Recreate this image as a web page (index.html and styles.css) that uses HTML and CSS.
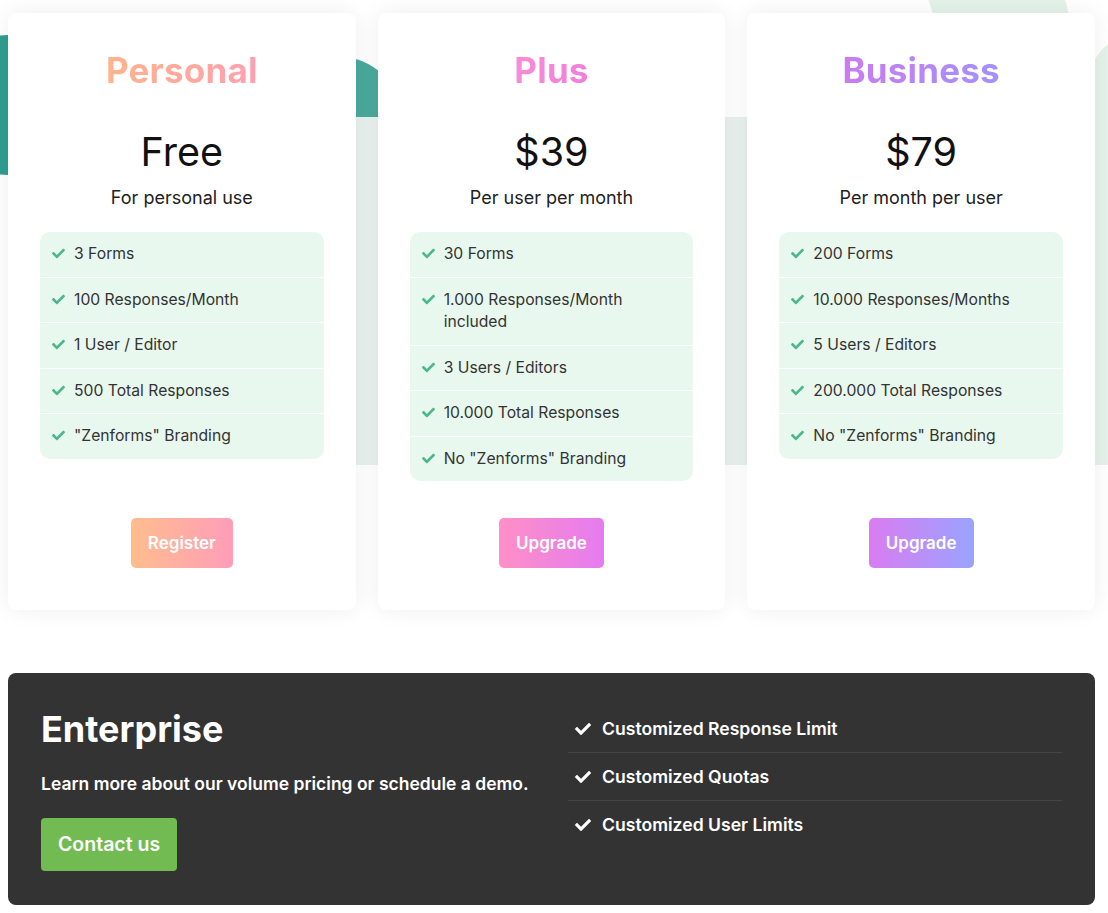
FILE: index.html
```html
<!DOCTYPE html>
<html lang="en">
<head>
<meta charset="utf-8">
<title>Pricing</title>
<link rel="stylesheet" href="styles.css">
</head>
<body>
<div class="page">
  <div class="deco" aria-hidden="true">
    <span class="blob blob-teal-left"></span>
    <span class="blob blob-teal-mid"></span>
    <span class="blob blob-band"></span>
    <span class="blob blob-green-top"></span>
    <span class="blob blob-green-right"></span>
  </div>

  <div class="plans">
    <article class="card">
      <h2 class="plan-name personal">Personal</h2>
      <div class="price">Free</div>
      <p class="period">For personal use</p>
      <ul class="features">
        <li><svg class="chk" viewBox="0 0 512 512"><path d="M173.9 439.4l-166.4-166.4c-10-10-10-26.2 0-36.2l36.2-36.2c10-10 26.2-10 36.2 0L192 312.7 432.1 72.6c10-10 26.2-10 36.2 0l36.2 36.2c10 10 10 26.2 0 36.2l-294.4 294.4c-10 10-26.2 10-36.2 0z"/></svg><span>3 Forms</span></li>
        <li><svg class="chk" viewBox="0 0 512 512"><path d="M173.9 439.4l-166.4-166.4c-10-10-10-26.2 0-36.2l36.2-36.2c10-10 26.2-10 36.2 0L192 312.7 432.1 72.6c10-10 26.2-10 36.2 0l36.2 36.2c10 10 10 26.2 0 36.2l-294.4 294.4c-10 10-26.2 10-36.2 0z"/></svg><span>100 Responses/Month</span></li>
        <li><svg class="chk" viewBox="0 0 512 512"><path d="M173.9 439.4l-166.4-166.4c-10-10-10-26.2 0-36.2l36.2-36.2c10-10 26.2-10 36.2 0L192 312.7 432.1 72.6c10-10 26.2-10 36.2 0l36.2 36.2c10 10 10 26.2 0 36.2l-294.4 294.4c-10 10-26.2 10-36.2 0z"/></svg><span>1 User / Editor</span></li>
        <li><svg class="chk" viewBox="0 0 512 512"><path d="M173.9 439.4l-166.4-166.4c-10-10-10-26.2 0-36.2l36.2-36.2c10-10 26.2-10 36.2 0L192 312.7 432.1 72.6c10-10 26.2-10 36.2 0l36.2 36.2c10 10 10 26.2 0 36.2l-294.4 294.4c-10 10-26.2 10-36.2 0z"/></svg><span>500 Total Responses</span></li>
        <li><svg class="chk" viewBox="0 0 512 512"><path d="M173.9 439.4l-166.4-166.4c-10-10-10-26.2 0-36.2l36.2-36.2c10-10 26.2-10 36.2 0L192 312.7 432.1 72.6c10-10 26.2-10 36.2 0l36.2 36.2c10 10 10 26.2 0 36.2l-294.4 294.4c-10 10-26.2 10-36.2 0z"/></svg><span>"Zenforms" Branding</span></li>
      </ul>
      <a class="btn btn-personal" href="#">Register</a>
    </article>

    <article class="card">
      <h2 class="plan-name plus">Plus</h2>
      <div class="price">$39</div>
      <p class="period">Per user per month</p>
      <ul class="features">
        <li><svg class="chk" viewBox="0 0 512 512"><path d="M173.9 439.4l-166.4-166.4c-10-10-10-26.2 0-36.2l36.2-36.2c10-10 26.2-10 36.2 0L192 312.7 432.1 72.6c10-10 26.2-10 36.2 0l36.2 36.2c10 10 10 26.2 0 36.2l-294.4 294.4c-10 10-26.2 10-36.2 0z"/></svg><span>30 Forms</span></li>
        <li><svg class="chk" viewBox="0 0 512 512"><path d="M173.9 439.4l-166.4-166.4c-10-10-10-26.2 0-36.2l36.2-36.2c10-10 26.2-10 36.2 0L192 312.7 432.1 72.6c10-10 26.2-10 36.2 0l36.2 36.2c10 10 10 26.2 0 36.2l-294.4 294.4c-10 10-26.2 10-36.2 0z"/></svg><span>1.000 Responses/Month<br>included</span></li>
        <li><svg class="chk" viewBox="0 0 512 512"><path d="M173.9 439.4l-166.4-166.4c-10-10-10-26.2 0-36.2l36.2-36.2c10-10 26.2-10 36.2 0L192 312.7 432.1 72.6c10-10 26.2-10 36.2 0l36.2 36.2c10 10 10 26.2 0 36.2l-294.4 294.4c-10 10-26.2 10-36.2 0z"/></svg><span>3 Users / Editors</span></li>
        <li><svg class="chk" viewBox="0 0 512 512"><path d="M173.9 439.4l-166.4-166.4c-10-10-10-26.2 0-36.2l36.2-36.2c10-10 26.2-10 36.2 0L192 312.7 432.1 72.6c10-10 26.2-10 36.2 0l36.2 36.2c10 10 10 26.2 0 36.2l-294.4 294.4c-10 10-26.2 10-36.2 0z"/></svg><span>10.000 Total Responses</span></li>
        <li><svg class="chk" viewBox="0 0 512 512"><path d="M173.9 439.4l-166.4-166.4c-10-10-10-26.2 0-36.2l36.2-36.2c10-10 26.2-10 36.2 0L192 312.7 432.1 72.6c10-10 26.2-10 36.2 0l36.2 36.2c10 10 10 26.2 0 36.2l-294.4 294.4c-10 10-26.2 10-36.2 0z"/></svg><span>No "Zenforms" Branding</span></li>
      </ul>
      <a class="btn btn-plus" href="#">Upgrade</a>
    </article>

    <article class="card">
      <h2 class="plan-name business">Business</h2>
      <div class="price">$79</div>
      <p class="period">Per month per user</p>
      <ul class="features">
        <li><svg class="chk" viewBox="0 0 512 512"><path d="M173.9 439.4l-166.4-166.4c-10-10-10-26.2 0-36.2l36.2-36.2c10-10 26.2-10 36.2 0L192 312.7 432.1 72.6c10-10 26.2-10 36.2 0l36.2 36.2c10 10 10 26.2 0 36.2l-294.4 294.4c-10 10-26.2 10-36.2 0z"/></svg><span>200 Forms</span></li>
        <li><svg class="chk" viewBox="0 0 512 512"><path d="M173.9 439.4l-166.4-166.4c-10-10-10-26.2 0-36.2l36.2-36.2c10-10 26.2-10 36.2 0L192 312.7 432.1 72.6c10-10 26.2-10 36.2 0l36.2 36.2c10 10 10 26.2 0 36.2l-294.4 294.4c-10 10-26.2 10-36.2 0z"/></svg><span>10.000 Responses/Months</span></li>
        <li><svg class="chk" viewBox="0 0 512 512"><path d="M173.9 439.4l-166.4-166.4c-10-10-10-26.2 0-36.2l36.2-36.2c10-10 26.2-10 36.2 0L192 312.7 432.1 72.6c10-10 26.2-10 36.2 0l36.2 36.2c10 10 10 26.2 0 36.2l-294.4 294.4c-10 10-26.2 10-36.2 0z"/></svg><span>5 Users / Editors</span></li>
        <li><svg class="chk" viewBox="0 0 512 512"><path d="M173.9 439.4l-166.4-166.4c-10-10-10-26.2 0-36.2l36.2-36.2c10-10 26.2-10 36.2 0L192 312.7 432.1 72.6c10-10 26.2-10 36.2 0l36.2 36.2c10 10 10 26.2 0 36.2l-294.4 294.4c-10 10-26.2 10-36.2 0z"/></svg><span>200.000 Total Responses</span></li>
        <li><svg class="chk" viewBox="0 0 512 512"><path d="M173.9 439.4l-166.4-166.4c-10-10-10-26.2 0-36.2l36.2-36.2c10-10 26.2-10 36.2 0L192 312.7 432.1 72.6c10-10 26.2-10 36.2 0l36.2 36.2c10 10 10 26.2 0 36.2l-294.4 294.4c-10 10-26.2 10-36.2 0z"/></svg><span>No "Zenforms" Branding</span></li>
      </ul>
      <a class="btn btn-business" href="#">Upgrade</a>
    </article>
  </div>

  <section class="enterprise">
    <div class="ent-left">
      <h2 class="ent-title">Enterprise</h2>
      <p class="ent-text">Learn more about our volume pricing or schedule a demo.</p>
      <a class="btn-contact" href="#">Contact us</a>
    </div>
    <ul class="ent-list">
      <li><svg class="echk" viewBox="0 0 512 512"><path d="M173.9 439.4l-166.4-166.4c-10-10-10-26.2 0-36.2l36.2-36.2c10-10 26.2-10 36.2 0L192 312.7 432.1 72.6c10-10 26.2-10 36.2 0l36.2 36.2c10 10 10 26.2 0 36.2l-294.4 294.4c-10 10-26.2 10-36.2 0z"/></svg><span>Customized Response Limit</span></li>
      <li><svg class="echk" viewBox="0 0 512 512"><path d="M173.9 439.4l-166.4-166.4c-10-10-10-26.2 0-36.2l36.2-36.2c10-10 26.2-10 36.2 0L192 312.7 432.1 72.6c10-10 26.2-10 36.2 0l36.2 36.2c10 10 10 26.2 0 36.2l-294.4 294.4c-10 10-26.2 10-36.2 0z"/></svg><span>Customized Quotas</span></li>
      <li><svg class="echk" viewBox="0 0 512 512"><path d="M173.9 439.4l-166.4-166.4c-10-10-10-26.2 0-36.2l36.2-36.2c10-10 26.2-10 36.2 0L192 312.7 432.1 72.6c10-10 26.2-10 36.2 0l36.2 36.2c10 10 10 26.2 0 36.2l-294.4 294.4c-10 10-26.2 10-36.2 0z"/></svg><span>Customized User Limits</span></li>
    </ul>
  </section>
</div>
</body>
</html>
```

FILE: styles.css
```css
* { box-sizing: border-box; }

html, body {
  margin: 0;
  padding: 0;
  background: #ffffff;
}

body {
  font-family: "Inter", "Noto Sans", "Liberation Sans", sans-serif;
  color: #222;
  overflow: hidden;
}

.page {
  position: relative;
  padding: 13px 13px 8px 8px;
}

/* decorative background shapes */
.deco {
  position: absolute;
  inset: 0;
  z-index: 0;
  overflow: hidden;
}

.blob {
  position: absolute;
  display: block;
}

.blob-teal-left {
  left: -62px;
  top: 35px;
  width: 140px;
  height: 140px;
  border-radius: 50%;
  background: #2f9e92;
}

.blob-teal-mid {
  left: 200px;
  top: 57px;
  width: 200px;
  height: 200px;
  border-radius: 0 60px 0 0;
  background: #4aaa9c;
}

.blob-band {
  left: 150px;
  top: 117px;
  width: 1000px;
  height: 348px;
  background: #e8f1ee;
}

.blob-green-top {
  left: 935px;
  top: -60px;
  width: 130px;
  height: 140px;
  border-radius: 0 0 40% 50%;
  background: #e5f2ea;
  transform: rotate(-18deg);
}

.blob-green-right {
  left: 1060px;
  top: 40px;
  width: 120px;
  height: 420px;
  border-radius: 50% 0 0 0;
  background: #e6f2ec;
}

/* plans */
.plans {
  position: relative;
  z-index: 1;
  display: grid;
  grid-template-columns: repeat(3, 1fr);
  gap: 22px;
}

.card {
  background: #fff;
  border-radius: 8px;
  box-shadow: 0 0 22px rgba(0, 0, 0, 0.07);
  padding: 36px 32px 42px;
  display: flex;
  flex-direction: column;
  align-items: center;
  min-height: 597px;
}

.plan-name {
  margin: 0;
  font-size: 35px;
  line-height: 42px;
  font-weight: 700;
  letter-spacing: 0.2px;
  -webkit-background-clip: text;
  background-clip: text;
  color: transparent;
}

.personal { background-image: linear-gradient(90deg, #ffb38c, #ffa0b0); }
.plus { background-image: linear-gradient(90deg, #f88cd8, #f17fd9); }
.business { background-image: linear-gradient(90deg, #c97df0, #a390ff); }

.price {
  margin-top: 38px;
  font-size: 39.5px;
  line-height: 46px;
  font-weight: 400;
  color: #111;
}

.period {
  margin: 11px 0 0;
  font-size: 18px;
  line-height: 24px;
  color: #222;
}

.features {
  list-style: none;
  margin: 22px 0 0;
  padding: 0;
  width: 100%;
  background: #e9f8ee;
  border-radius: 10px;
  overflow: hidden;
}

.features li {
  display: flex;
  align-items: flex-start;
  gap: 9px;
  padding: 11px 12px 11px 12px;
  font-size: 15.7px;
  line-height: 22.5px;
  color: #333;
  border-top: 1px solid #fbfefc;
}

.features li:first-child { border-top: none; }

.chk {
  width: 13px;
  height: 13px;
  flex: none;
  margin-top: 4px;
  fill: #4cb88a;
}

.btn {
  margin-top: auto;
  display: inline-block;
  height: 50px;
  line-height: 50px;
  padding: 0 17px;
  border-radius: 5px;
  color: #fff;
  font-size: 17px;
  font-weight: 600;
  text-decoration: none;
}

.btn-personal { background: linear-gradient(90deg, #ffbd8d, #ff9dba); }
.btn-plus { background: linear-gradient(90deg, #ff8fc6, #e47cf0); }
.btn-business { background: linear-gradient(90deg, #d97cf0, #9aa3ff); }

/* enterprise */
.enterprise {
  position: relative;
  z-index: 1;
  margin-top: 63px;
  background: #333333;
  border-radius: 8px;
  padding: 32px 33px 34px;
  display: grid;
  grid-template-columns: 1fr 1fr;
  column-gap: 33px;
  color: #fff;
}

.ent-title {
  margin: 3px 0 0;
  font-size: 36px;
  line-height: 42px;
  font-weight: 700;
}

.ent-text {
  margin: 22px 0 0;
  font-size: 17.5px;
  line-height: 24px;
  font-weight: 600;
}

.btn-contact {
  margin-top: 22px;
  display: inline-block;
  height: 53px;
  line-height: 53px;
  padding: 0 17px;
  background: #72bb53;
  color: #fff;
  border-radius: 4px;
  font-size: 19.5px;
  font-weight: 600;
  text-decoration: none;
}

.ent-list {
  list-style: none;
  margin: 0;
  padding: 0;
  align-self: start;
}

.ent-list li {
  display: flex;
  align-items: center;
  gap: 11px;
  padding: 12px 7px;
  font-size: 17.6px;
  line-height: 23px;
  font-weight: 600;
  border-top: 1px solid #454545;
}

.ent-list li:first-child { border-top: none; }

.echk {
  width: 16px;
  height: 16px;
  flex: none;
  fill: #fff;
}
```
